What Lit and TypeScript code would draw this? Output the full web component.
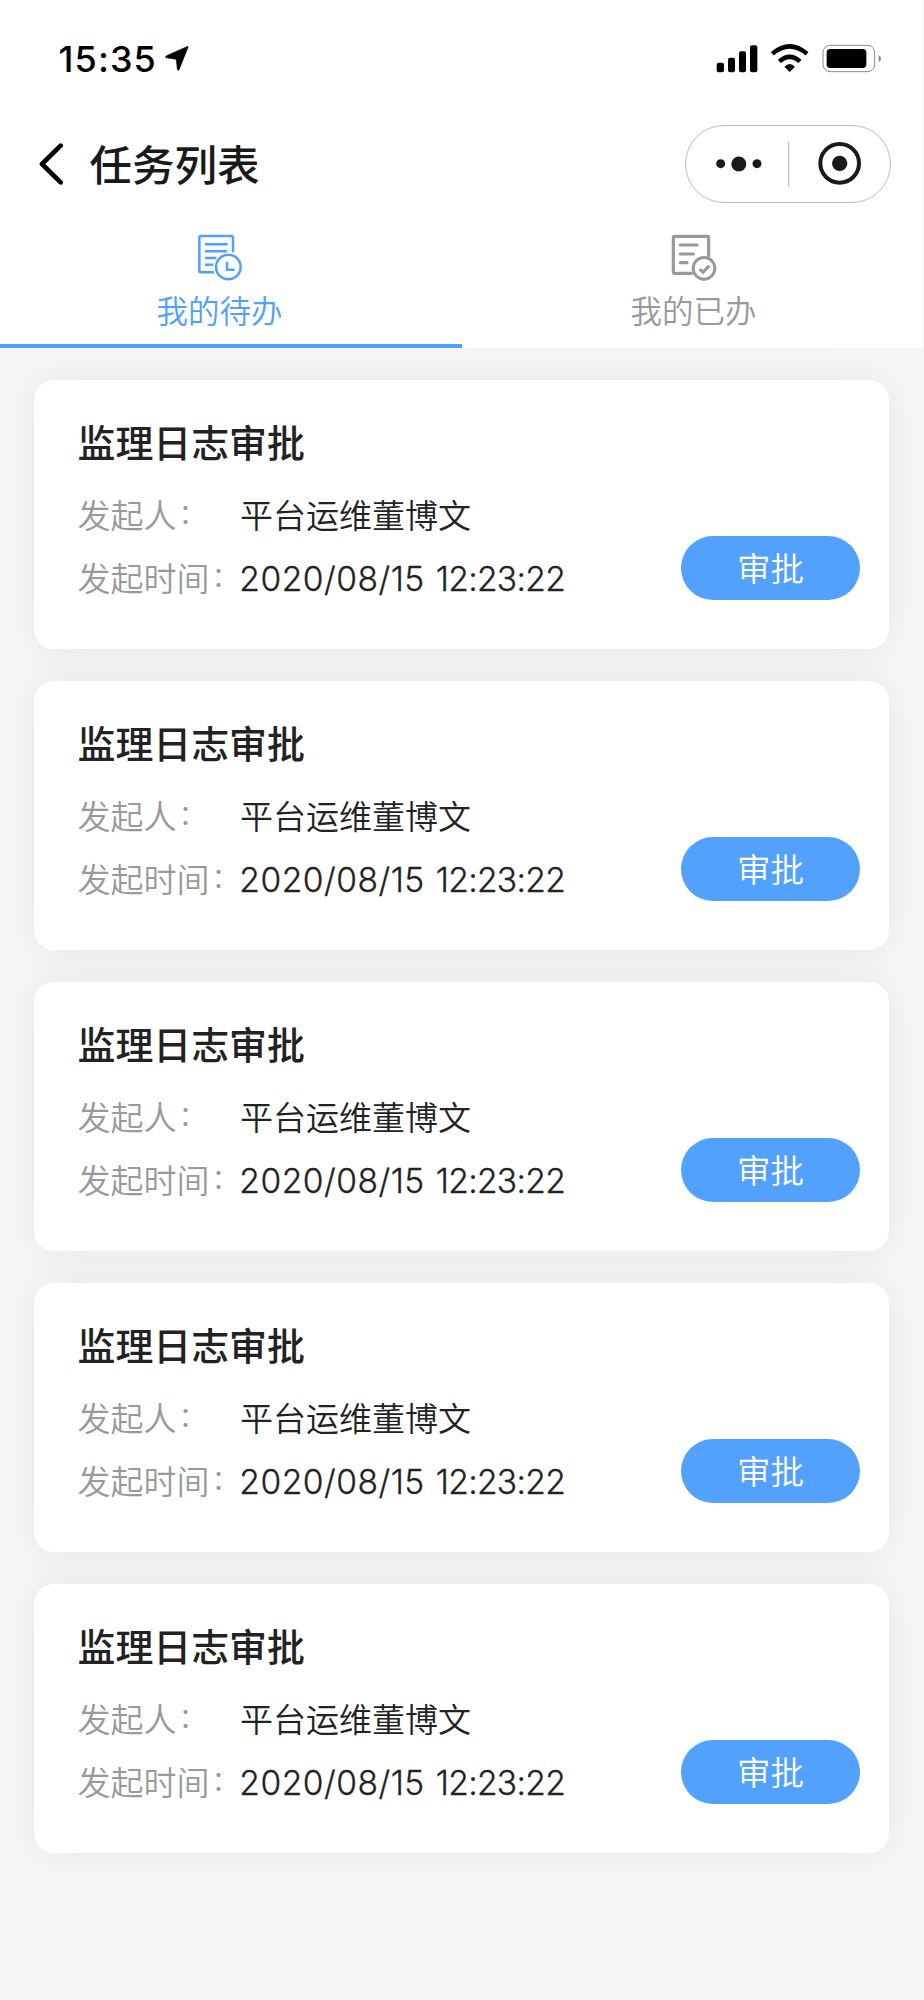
import { LitElement, html, css, svg } from "lit";
import { customElement, property } from "lit/decorators.js";

const FONT = css`"Noto Sans CJK SC", sans-serif`;

interface Task {
  title: string;
  person: string;
  date: string;
  time: string;
}

@customElement("status-bar")
class StatusBar extends LitElement {
  static styles = css`
    :host { display: flex; height: 120px; box-sizing: border-box; padding: 0 39px 0 58.500px; justify-content: space-between; }
    .left { display: flex; }
    .time { font: 500 36px/40px "Inter", sans-serif; letter-spacing: 1.100px; color: #000; margin-top: 39px; width: 106.500px; white-space: nowrap; }
    svg { display: block; }
    .arrow { margin-top: 46px; }
    .icons { margin-top: 40px; }
  `;
  render() {
    return html`
      <div class="left">
        <div class="time">15:35</div>
        <svg class="arrow" width="26" height="26" viewBox="492 78 78 78">
          <path d="M561 82 L534 149 Q531 153 529 148 L526 118 L496 113 Q491 110 497 107 L558 80 Q563 79 561 82Z" fill="#000" stroke="#000" stroke-width="2" stroke-linejoin="round" />
        </svg>
      </div>
      <svg class="icons" width="170" height="36" viewBox="160 60 510 108">
        <rect x="168" y="128" width="22" height="29" rx="6" />
        <rect x="202" y="113" width="21" height="44" rx="6" />
        <rect x="235" y="94" width="21" height="63" rx="6" />
        <rect x="268" y="76" width="22" height="81" rx="6" />
        <path d="M335 101 Q387 57 439 101" fill="none" stroke="#000" stroke-width="13.500" />
        <path d="M356 124 Q387 97 418 124" fill="none" stroke="#000" stroke-width="13.500" />
        <path d="M371 140 Q387 124 403 140 L387 156Z" />
        <rect x="487" y="76" width="155" height="79" rx="21" fill="none" stroke="#888" stroke-width="3" />
        <rect x="498" y="87" width="119" height="57" rx="11" />
        <path d="M654 106 Q661 109 661 116 Q661 123 654 126Z" fill="#888" />
      </svg>
    `;
  }
}

@customElement("nav-header")
class NavHeader extends LitElement {
  static styles = css`
    :host { display: flex; height: 109px; align-items: flex-start; padding: 5px 32px 0 39px; box-sizing: border-box; }
    svg { display: block; flex: none; }
    .back { margin-top: 17px; }
    .title { flex: 1; margin: 7px 0 0 24.500px; font: 500 42.5px/62px ${FONT}; color: #1a1a1a; }
    .capsule { box-sizing: border-box; width: 206px; height: 78px; border: 1px solid #bcbcbc; border-radius: 39px; display: flex; align-items: center; }
    .capsule svg { margin-left: -1px; }
  `;
  render() {
    return html`
      <svg class="back" width="26" height="44" viewBox="117 366 78 132">
        <path d="M182 377 L126 432 L182 487" fill="none" stroke="#000" stroke-width="14" stroke-linecap="round" stroke-linejoin="round" />
      </svg>
      <div class="title">任务列表</div>
      <div class="capsule">
        <svg width="206" height="76" viewBox="76 318 618 228">
          <circle cx="183" cy="431" r="13.5" fill="#1a1a1a" />
          <circle cx="237.500" cy="432" r="22.500" fill="#1a1a1a" />
          <circle cx="292" cy="431" r="13.500" fill="#1a1a1a" />
          <path d="M387 365V500" stroke="#bcbcbc" stroke-width="3.500" />
          <circle cx="540" cy="430" r="58" fill="none" stroke="#1a1a1a" stroke-width="12" />
          <circle cx="540" cy="430" r="23" fill="#1a1a1a" />
        </svg>
      </div>
    `;
  }
}

const todoIcon = svg`
  <path d="M282 157H243Q238 157 238 152V53Q238 48 243 48H334Q339 48 339 53V97" stroke-width="7.500" />
  <path d="M255 73H323M255 94H321M255 114H289M255 134H280" stroke-width="7.500" />
  <circle cx="325" cy="141" r="37" stroke-width="7.500" />
  <path d="M321 125V149H344" stroke-width="7.500" />`;

const doneIcon = svg`
  <path d="M278 160H224Q220 160 220 156V54Q220 49 224 49H322Q326 49 326 54V112" stroke-width="9.500" />
  <path d="M241 75H291M241 102H280M241 128H261" stroke-width="9.500" stroke-linecap="round" />
  <circle cx="312" cy="145" r="32.500" stroke-width="9" />
  <path d="M299 147L309 157L328 137" stroke-width="9.500" />`;

@customElement("task-tabs")
class TaskTabs extends LitElement {
  static styles = css`
    :host { display: flex; height: 118.500px; }
    .tab { flex: none; width: 462px; box-sizing: border-box; padding: 4px 0 0 2px; display: flex; flex-direction: column; align-items: center; color: #999; border-bottom: 4px solid transparent; }
    .tab.on { color: #4fa0ff; border-color: #4fa0ff; padding: 4px 22px 0 0; }
    .label { font: 350 31.500px/46px ${FONT}; margin: 3px 0 0 -1px; }
    svg { display: block; fill: none; stroke: currentColor; }
  `;
  render() {
    return html`
      <div class="tab on">
        <svg width="46" height="50" viewBox="231 39 138 150">${todoIcon}</svg>
        <div class="label">我的待办</div>
      </div>
      <div class="tab">
        <svg width="46" height="50" viewBox="213 39 138 150">${doneIcon}</svg>
        <div class="label">我的已办</div>
      </div>
    `;
  }
}

@customElement("task-card")
class TaskCard extends LitElement {
  static styles = css`
    :host { display: flex; justify-content: space-between; box-sizing: border-box; height: 268.500px; background: #fff; border-radius: 20px; box-shadow: 0 0 40px rgba(0, 0, 0, 0.06); padding: 33px 29px 0 43.500px; }
    .title { font: 500 37.900px/56px ${FONT}; color: #222; }
    .rows { display: grid; grid-template-columns: 162.500px auto; grid-auto-rows: 63px; margin-top: 14px; font: 350 33px/63px ${FONT}; color: #222; white-space: nowrap; }
    .key { color: #999; }
    .colon { position: relative; top: -4px; left: 2px; font-size: 28px; line-height: 1; }
    .stamp { font: 300 33.600px/63px "Inter", sans-serif; -webkit-text-stroke: 0.300px #222; font-feature-settings: "calt" 0; padding-top: 1px; margin-left: -0.700px; height: 61px; }
    .day { letter-spacing: 0.500px; margin-right: 1.500px; }
    .clock { letter-spacing: -0.700px; }
    .btn { margin-top: 123px; width: 179px; height: 63.500px; border: 0; padding: 0 0 2px; border-radius: 32px; background: #52a1ff; color: #fff; font: 350 33.500px/61px ${FONT}; }
  `;
  @property({ attribute: false }) task!: Task;
  render() {
    return html`
      <div>
        <div class="title">${this.task.title}</div>
        <div class="rows">
          <span class="key">发起人<span class="colon">：</span></span>
          <span>${this.task.person}</span>
          <span class="key">发起时间<span class="colon">：</span></span>
          <span class="stamp"><span class="day">${this.task.date}</span> <span class="clock">${this.task.time}</span></span>
        </div>
      </div>
      <button class="btn">审批</button>
    `;
  }
}

@customElement("app-root")
class AppRoot extends LitElement {
  static styles = css`
    :host { display: flex; flex-direction: column; width: 924px; height: 2000px; overflow: hidden; background: #f5f5f5; }
    .top { background: #fff; border-right: 1px solid #f5f5f5; }
    .list { flex: 1; overflow: hidden; display: flex; flex-direction: column; gap: 32.500px; padding: 32.500px 35px 0 34px; }
    task-card { flex: none; }
  `;
  private tasks: Task[] = Array.from({ length: 5 }, () => ({
    title: "监理日志审批",
    person: "平台运维董博文",
    date: "2020/08/15",
    time: "12:23:22",
  }));
  render() {
    return html`
      <div class="top">
        <status-bar></status-bar>
        <nav-header></nav-header>
        <task-tabs></task-tabs>
      </div>
      <div class="list">
        ${this.tasks.map((t) => html`<task-card .task=${t}></task-card>`)}
      </div>
    `;
  }
}
